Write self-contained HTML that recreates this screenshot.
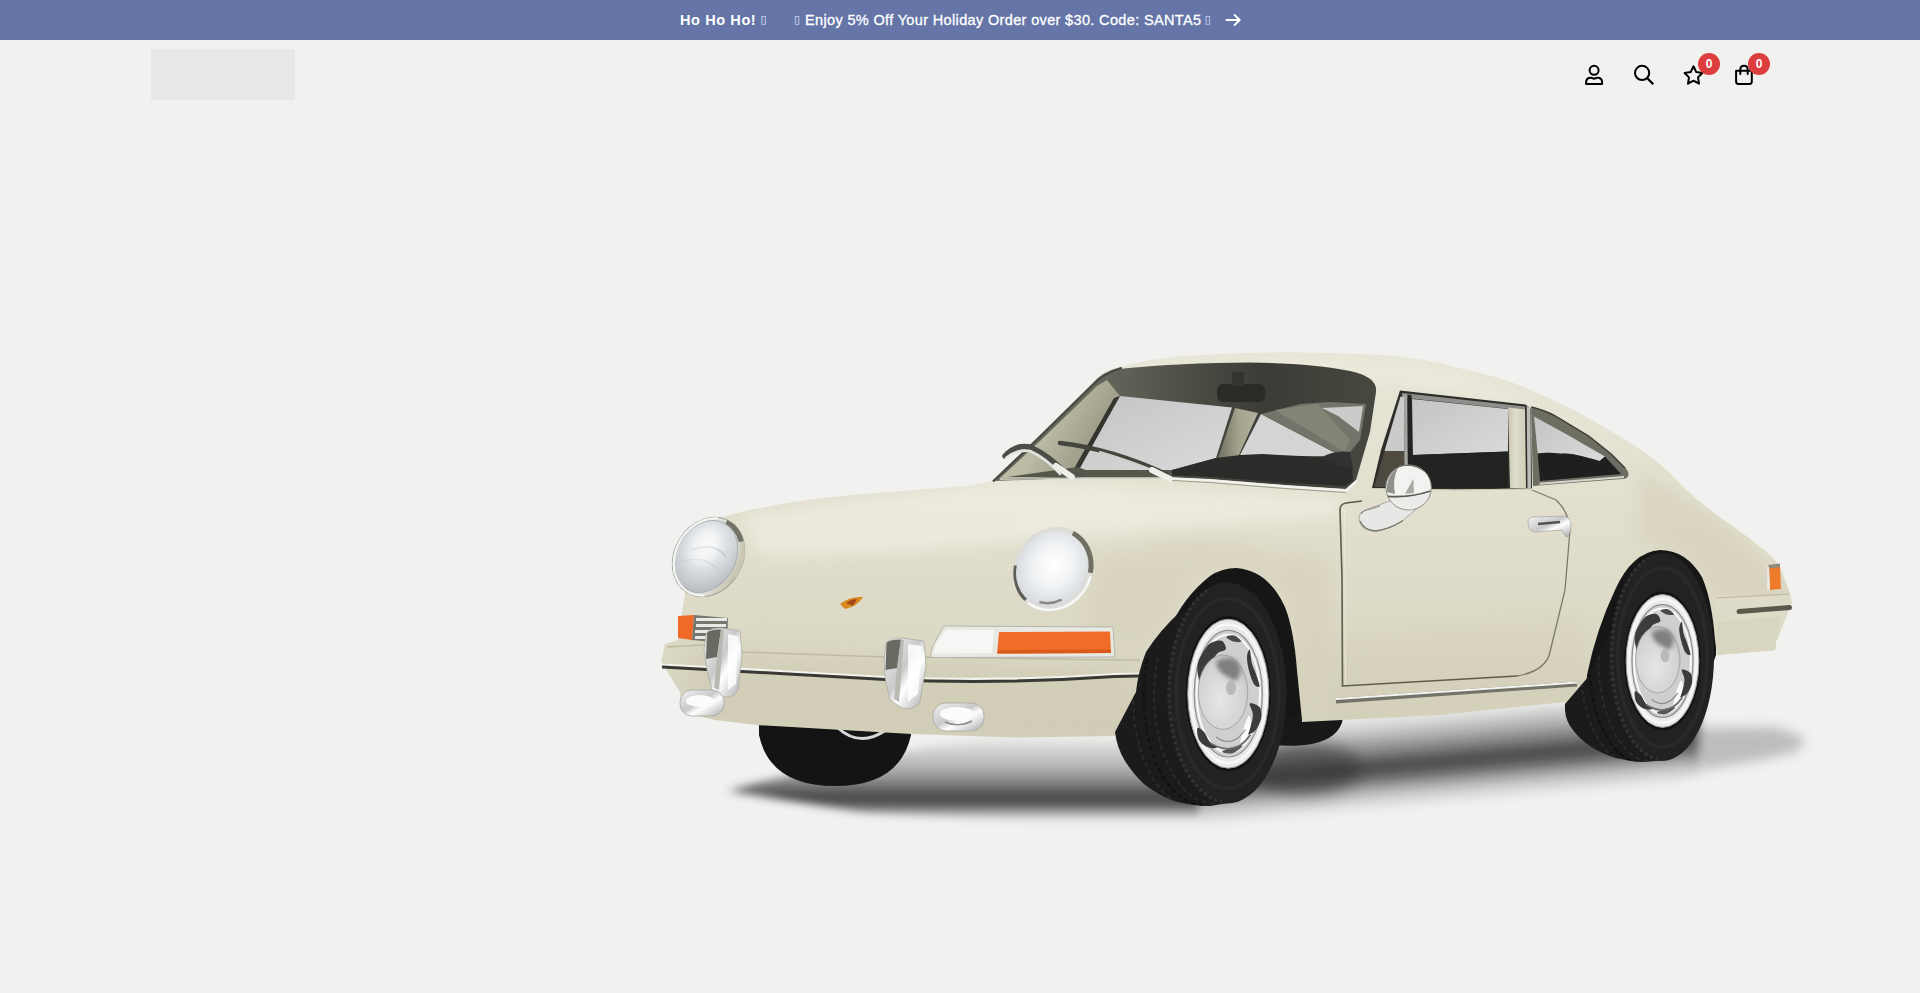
<!DOCTYPE html>
<html lang="en">
<head>
<meta charset="utf-8">
<title>Holiday Store</title>
<style>
*{box-sizing:border-box;margin:0;padding:0}
html,body{width:1920px;height:993px;overflow:hidden;background:#f1f1ef;font-family:"Liberation Sans","DejaVu Sans",sans-serif}
.banner{position:absolute;left:0;top:0;width:1920px;height:40px;background:#6575a8;color:#fff;font-size:14.5px;letter-spacing:.35px;line-height:40px;white-space:nowrap}
.banner span{position:absolute;top:0;height:40px}
.banner .b1{left:680px;font-weight:700;letter-spacing:.6px}
.banner .b2{left:805px;-webkit-text-stroke:.3px #fff}
.banner .tofu{top:10px;height:20px;font:11px/20px "DejaVu Sans",sans-serif;letter-spacing:0;color:#e4e8f8}
.logo{position:absolute;left:151px;top:49px;width:144px;height:51px;background:#e8e8e6}
.stage{position:absolute;left:0;top:0;width:1920px;height:993px}
.badge{position:absolute;top:53px;width:22px;height:22px;border-radius:50%;background:#dc3d3d;color:#fff;font-size:12px;font-weight:700;text-align:center;line-height:22px}
</style>
</head>
<body>
<svg class="stage" viewBox="0 0 1920 993">
<defs>
<filter id="b2" x="-20%" y="-20%" width="140%" height="140%"><feGaussianBlur stdDeviation="2"/></filter>
<filter id="b4" x="-20%" y="-20%" width="140%" height="140%"><feGaussianBlur stdDeviation="4"/></filter>
<filter id="b6" x="-30%" y="-40%" width="160%" height="180%"><feGaussianBlur stdDeviation="6"/></filter>
<filter id="b8" x="-30%" y="-30%" width="160%" height="160%"><feGaussianBlur stdDeviation="8"/></filter>
<filter id="b14" x="-30%" y="-50%" width="160%" height="200%"><feGaussianBlur stdDeviation="14"/></filter>
<linearGradient id="shad" x1="0" y1="0" x2="0" y2="1">
<stop offset="0" stop-color="#8a8a8a" stop-opacity=".15"/><stop offset=".45" stop-color="#4a4a4a" stop-opacity=".8"/><stop offset="1" stop-color="#2c2c2c"/>
</linearGradient>
<linearGradient id="shA" x1="0" y1="737" x2="0" y2="822" gradientUnits="userSpaceOnUse">
<stop offset="0" stop-color="#777" stop-opacity=".05"/><stop offset=".42" stop-color="#5a5a5a" stop-opacity=".5"/><stop offset=".72" stop-color="#363636" stop-opacity=".94"/><stop offset=".83" stop-color="#444" stop-opacity=".75"/><stop offset="1" stop-color="#888" stop-opacity="0"/>
</linearGradient>
<linearGradient id="shB" x1="1445" y1="715" x2="1453" y2="805" gradientUnits="userSpaceOnUse">
<stop offset="0" stop-color="#777" stop-opacity=".12"/><stop offset=".25" stop-color="#5e5e5e" stop-opacity=".55"/><stop offset=".5" stop-color="#3a3a3a" stop-opacity=".93"/><stop offset=".62" stop-color="#444" stop-opacity=".8"/><stop offset=".8" stop-color="#666" stop-opacity=".35"/><stop offset="1" stop-color="#888" stop-opacity="0"/>
</linearGradient>
<linearGradient id="body" x1="0" y1="350" x2="0" y2="740" gradientUnits="userSpaceOnUse">
<stop offset="0" stop-color="#e8e6d8"/><stop offset=".4" stop-color="#e2dfce"/><stop offset=".75" stop-color="#dbd8c4"/><stop offset="1" stop-color="#d3d0ba"/>
</linearGradient>
<linearGradient id="wsband" x1="1100" y1="0" x2="1376" y2="0" gradientUnits="userSpaceOnUse"><stop offset="0" stop-color="#66675c"/><stop offset=".35" stop-color="#4a4b43"/><stop offset=".6" stop-color="#3b3c36"/><stop offset="1" stop-color="#47483f"/></linearGradient>
<linearGradient id="wsleft" x1="1040" y1="440" x2="1090" y2="470" gradientUnits="userSpaceOnUse"><stop offset="0" stop-color="#bcbba6"/><stop offset="1" stop-color="#969581"/></linearGradient>
<linearGradient id="wspillar" x1="0" y1="0" x2="1" y2="0"><stop offset="0" stop-color="#6f6f60"/><stop offset=".5" stop-color="#a3a28d"/><stop offset="1" stop-color="#b3b19c"/></linearGradient>
<linearGradient id="bpillar" x1="0" y1="0" x2="1" y2="0"><stop offset="0" stop-color="#c9c6b2"/><stop offset=".4" stop-color="#dedbc9"/><stop offset="1" stop-color="#d0cdb9"/></linearGradient>
<linearGradient id="glass" x1="0" y1="0" x2="1" y2="1">
<stop offset="0" stop-color="#c4c4c4"/><stop offset="1" stop-color="#dadada"/>
</linearGradient>
<linearGradient id="ringL" x1="0" y1="0" x2="1" y2="0"><stop offset="0" stop-color="#d6d6d4"/><stop offset=".7" stop-color="#e2e2de"/><stop offset="1" stop-color="#c4c1ab"/></linearGradient>
<radialGradient id="lamp2" cx=".5" cy=".45" r=".6"><stop offset="0" stop-color="#ffffff"/><stop offset=".45" stop-color="#f1f3f5"/><stop offset="1" stop-color="#d3d7da"/></radialGradient>
<radialGradient id="lamp" cx=".42" cy=".36" r=".7">
<stop offset="0" stop-color="#f3f5f6"/><stop offset=".55" stop-color="#d6dadd"/><stop offset="1" stop-color="#b3b8bd"/>
</radialGradient>
<linearGradient id="chrome" x1="0" y1="0" x2="1" y2="1">
<stop offset="0" stop-color="#f4f4f4"/><stop offset=".45" stop-color="#c9c9c9"/><stop offset=".6" stop-color="#ffffff"/><stop offset="1" stop-color="#a9a9a9"/>
</linearGradient>
<radialGradient id="rim" cx=".5" cy=".5" r=".5">
<stop offset="0" stop-color="#e9e9e9"/><stop offset=".45" stop-color="#dcdcdc"/><stop offset=".6" stop-color="#9a9a9a"/><stop offset=".75" stop-color="#f2f2f2"/><stop offset="1" stop-color="#cfcfcf"/>
</radialGradient>
<clipPath id="bodyclip"><path d="M684 600C684.8 594.7 686.5 577.8 689.0 568.0C691.5 558.2 695.0 548.3 699.0 541.0C703.0 533.7 707.8 528.3 713.0 524.0C718.2 519.7 721.3 517.8 730.0 515.0C738.7 512.2 750.8 509.7 765.0 507.0C779.2 504.3 798.3 501.2 815.0 499.0C831.7 496.8 848.3 495.5 865.0 494.0C881.7 492.5 898.3 491.3 915.0 490.0C931.7 488.7 952.2 487.5 965.0 486.0C977.8 484.5 987.5 481.8 992.0 481.0C999.2 474.2 1018.3 456.2 1035.0 440.0C1051.7 423.8 1080.5 395.2 1092.0 384.0C1103.5 372.8 1099.0 375.4 1104.0 372.5C1109.0 369.6 1112.7 368.8 1122.0 366.5C1131.3 364.2 1145.3 360.5 1160.0 358.5C1174.7 356.5 1189.2 355.5 1210.0 354.5C1230.8 353.5 1260.0 352.6 1285.0 352.5C1310.0 352.4 1340.8 353.3 1360.0 354.0C1379.2 354.7 1387.5 355.2 1400.0 356.5C1412.5 357.8 1425.8 360.2 1435.0 362.0C1444.2 363.8 1443.3 364.0 1455.0 367.0C1466.7 370.0 1488.3 374.3 1505.0 380.0C1521.7 385.7 1538.3 393.1 1555.0 401.0C1571.7 408.9 1588.3 417.7 1605.0 427.5C1621.7 437.3 1640.5 448.8 1655.0 460.0C1669.5 471.2 1681.7 485.8 1692.0 495.0C1702.3 504.2 1706.5 507.1 1717.0 515.0C1727.5 522.9 1745.0 534.6 1755.0 542.5C1765.0 550.4 1772.2 556.6 1777.0 562.5C1781.8 568.4 1781.8 572.8 1784.0 578.0C1786.2 583.2 1789.0 591.3 1790.0 594.0L1792 602 L1777 640 L1775 650 L1717 655 L1715 640 Q1712 600 1702 577 Q1686 550 1660 550 Q1632 552 1615 590 Q1596 630 1587 675 L1585 700 L1440 715 L1302 722 L1302 720 L1297 670 Q1294 630 1285 607 Q1268 570 1236 568 Q1222 568 1210 576 Q1183 597 1168 632 L1160 700 L1140 722 L1115 736 L1015 737.5 L912 734 L757 725 L715 720 L682 712 L680 692 L661 662 L665 644 L678 640Z"/></clipPath>
<radialGradient id="hub" cx=".45" cy=".6" r=".7"><stop offset="0" stop-color="#e6e6e8"/><stop offset=".7" stop-color="#d2d2d4"/><stop offset="1" stop-color="#b4b4b6"/></radialGradient>
<clipPath id="shadclip"><rect x="600" y="700" width="1320" height="293"/></clipPath>
</defs>

<!-- ground shadow -->
<g id="shadow">
<path d="M728 791 L760 782 L910 750 L990 737 L1200 737 L1200 826 L1117 826 L867 813Z" fill="url(#shA)" filter="url(#b4)"/>
<path d="M1200 737 L1300 722 L1590 700 L1700 700 L1700 775 L1620 800 L1500 815 L1305 832 L1200 832Z" fill="url(#shB)" filter="url(#b4)"/>
<ellipse cx="1305" cy="768" rx="55" ry="26" fill="#333" opacity=".55" filter="url(#b8)"/>
<path d="M1690 728 L1775 727 L1806 738 L1796 752 L1760 760 L1700 770Z" fill="#8a8a8a" opacity=".5" filter="url(#b6)"/>
</g>

<!-- far front wheel under bumper -->
<path d="M759 720 L911 720 L911 735 Q900 786 835 786 Q770 786 759 735 Z" fill="#141414"/>
<path d="M838 728 Q860 748 886 730" fill="none" stroke="#d8d8d8" stroke-width="3"/>

<!-- dark arch interiors -->
<path d="M1140 700 L1160 600 L1200 560 L1260 556 L1300 600 L1310 726 L1140 728Z" fill="#161616"/>
<path d="M1580 700 L1600 590 L1640 540 L1690 540 L1716 590 L1716 655 L1700 700Z" fill="#161616"/>
<path d="M1270 716 L1343 718 Q1340 738 1312 744 Q1296 747 1270 745Z" fill="#181818"/>

<!-- body silhouette -->
<path id="bodyshape" d="M684 600C684.8 594.7 686.5 577.8 689.0 568.0C691.5 558.2 695.0 548.3 699.0 541.0C703.0 533.7 707.8 528.3 713.0 524.0C718.2 519.7 721.3 517.8 730.0 515.0C738.7 512.2 750.8 509.7 765.0 507.0C779.2 504.3 798.3 501.2 815.0 499.0C831.7 496.8 848.3 495.5 865.0 494.0C881.7 492.5 898.3 491.3 915.0 490.0C931.7 488.7 952.2 487.5 965.0 486.0C977.8 484.5 987.5 481.8 992.0 481.0C999.2 474.2 1018.3 456.2 1035.0 440.0C1051.7 423.8 1080.5 395.2 1092.0 384.0C1103.5 372.8 1099.0 375.4 1104.0 372.5C1109.0 369.6 1112.7 368.8 1122.0 366.5C1131.3 364.2 1145.3 360.5 1160.0 358.5C1174.7 356.5 1189.2 355.5 1210.0 354.5C1230.8 353.5 1260.0 352.6 1285.0 352.5C1310.0 352.4 1340.8 353.3 1360.0 354.0C1379.2 354.7 1387.5 355.2 1400.0 356.5C1412.5 357.8 1425.8 360.2 1435.0 362.0C1444.2 363.8 1443.3 364.0 1455.0 367.0C1466.7 370.0 1488.3 374.3 1505.0 380.0C1521.7 385.7 1538.3 393.1 1555.0 401.0C1571.7 408.9 1588.3 417.7 1605.0 427.5C1621.7 437.3 1640.5 448.8 1655.0 460.0C1669.5 471.2 1681.7 485.8 1692.0 495.0C1702.3 504.2 1706.5 507.1 1717.0 515.0C1727.5 522.9 1745.0 534.6 1755.0 542.5C1765.0 550.4 1772.2 556.6 1777.0 562.5C1781.8 568.4 1781.8 572.8 1784.0 578.0C1786.2 583.2 1789.0 591.3 1790.0 594.0L1792 602 L1777 640 L1775 650 L1717 655 L1715 640 Q1712 600 1702 577 Q1686 550 1660 550 Q1632 552 1615 590 Q1596 630 1587 675 L1585 700 L1440 715 L1302 722 L1302 720 L1297 670 Q1294 630 1285 607 Q1268 570 1236 568 Q1222 568 1210 576 Q1183 597 1168 632 L1160 700 L1140 722 L1115 736 L1015 737.5 L912 734 L757 725 L715 720 L682 712 L680 692 L661 662 L665 644 L678 640Z" fill="url(#body)"/>

<!-- body shading -->
<g clip-path="url(#bodyclip)">
<path d="M740 516 L1000 480 L1200 490 L1340 497 L1340 516 L1100 535 L900 552 L760 556Z" fill="#f0eee4" opacity=".75" filter="url(#b8)"/>
<path d="M1110 372 L1290 356 L1450 368 L1600 430 L1520 402 L1400 384 L1120 376Z" fill="#eeebde" opacity=".6" filter="url(#b4)"/>
<path d="M690 650 L1140 670 L1140 740 L690 720Z" fill="#cbc6ad" opacity=".4" filter="url(#b8)"/>
<path d="M1340 640 L1580 620 L1590 700 L1340 720Z" fill="#cdc8b0" opacity=".25" filter="url(#b8)"/>
<path d="M1090 560 L1200 540 L1330 560 L1335 700 L1300 700 L1290 600 L1240 565 L1200 575 L1150 640 L1090 640Z" fill="#d2cdb6" opacity=".45" filter="url(#b8)"/>
<path d="M1640 470 L1720 520 L1785 580 L1790 600 L1720 600 L1690 560 L1640 540Z" fill="#d0cbb4" opacity=".45" filter="url(#b8)"/>
</g>


<!-- windshield -->
<path d="M994 481 L1036 441 L1094 384 Q1104 372.5 1124 368.5 Q1180 363 1250 362.5 Q1310 363 1350 371 Q1378 377 1376 392 L1370 432 L1356 480 L1346 489 L1285 485 L1210 479 L1172 477.5 L1085 477.5Z" fill="url(#wsband)"/>
<!-- inner glass zones -->
<path d="M999 479 L1040 441 L1097 386 L1107 380 L1120 396 L1078 467 L1072 477Z" fill="url(#wsleft)"/>
<path d="M993 481.5 L1036 440.5 L1093 384.5 Q1103 373 1122 368" fill="none" stroke="#4b4b43" stroke-width="2.4"/>
<path d="M1120 396 L1232 407.5 L1216 458 L1172 470 L1085 470 L1078 467Z" fill="url(#glass)"/>
<path d="M1235 408 L1258 413 L1238 457 L1218 458Z" fill="url(#wspillar)"/>
<path d="M1261 414 L1341 456 L1239 457Z" fill="#d4d4d4"/>
<path d="M1261 414 L1300 404 L1330 402 L1366 404 L1360 440 L1346 457 L1341 456Z" fill="#74756a"/>
<path d="M1275 410 L1318 404 L1350 440 L1345 452Z" fill="#8c8c7e" opacity=".7"/>
<path d="M1322 408 L1363 406 L1359 432 L1338 416Z" fill="#cbcbc9"/>
<path d="M1172 470 L1216 458 L1240 455 L1262 454 L1340 458 L1352 464 L1353 481 L1345 486 L1285 482.5 L1210 477 L1172 475.5Z" fill="#2b2c2a"/>
<path d="M1320 458 Q1335 450 1350 452 L1353 470 L1340 466Z" fill="#303130"/>
<rect x="1217" y="384" width="48" height="18" rx="6" fill="#2a2a27"/>
<rect x="1232" y="372" width="12" height="14" fill="#33342e"/>
<path d="M1114 398 L1120 396 L1080 468 L1075 467Z" fill="#33342e"/>
<path d="M1078 467 L1085 470 L1172 470 L1172 477 L1085 477 L1008 477Z" fill="#55564c"/>
<!-- windshield chrome lower edge -->
<path d="M1172 478.5 L1210 480.5 L1285 486.5 L1346 490.5 L1357 481" fill="none" stroke="#f2f2ee" stroke-width="2.4" stroke-linejoin="round"/>
<path d="M1172 480.5 L1210 482.5 L1285 488.5 L1346 492.5" fill="none" stroke="#9d9a88" stroke-width="1"/>
<path d="M1000 479.5 L1085 478 L1172 478" fill="none" stroke="#c9c9c0" stroke-width="1.2"/>
<!-- wipers -->
<path d="M1005 456 Q1016 444 1030 447 Q1050 456 1066 474" fill="none" stroke="#4d4d47" stroke-width="5.5" stroke-linecap="round"/>
<path d="M1006 458 Q1017 449 1030 451 Q1046 458 1060 474" fill="none" stroke="#e4e4e0" stroke-width="2.6" stroke-linecap="round"/>
<path d="M1056 466 L1072 477" fill="none" stroke="#efefea" stroke-width="6" stroke-linecap="round"/>
<path d="M1060 443 Q1112 449 1166 474" fill="none" stroke="#44443f" stroke-width="4.5" stroke-linecap="round"/>
<path d="M1100 452 Q1135 462 1166 476" fill="none" stroke="#cfcfca" stroke-width="2.2" stroke-linecap="round"/>
<path d="M1152 470 L1170 479" fill="none" stroke="#efefea" stroke-width="6" stroke-linecap="round"/>
<path d="M1076 468 L1092 446" fill="none" stroke="#3c3c37" stroke-width="1.6"/>

<!-- side door window -->
<path d="M1400 390.5 L1525.5 404.5 L1531 409 L1532 488.5 L1455 489.5 L1372 488 L1381 450Z" fill="#2d2d29"/>
<path d="M1402 393 L1525 406.5 L1525 410.5 L1402 397.500Z" fill="#8e8e8a"/>
<path d="M1400.5 396.5 L1404 397 L1404.5 451 L1384.5 451Z" fill="#cbcbcb"/>
<path d="M1384.5 451 L1404.5 451 L1404.5 487 L1374 487Z" fill="#4e4a3f"/>
<path d="M1404 394 L1407.5 394.5 L1408 487.5 L1404.5 487.500Z" fill="#a4a4a0"/>
<path d="M1407.5 394.5 L1411.5 395 L1412.5 488 L1408 488Z" fill="#232321"/>
<path d="M1412 399 L1508 409 L1508 451.5 L1413 455Z" fill="url(#glass)"/>
<path d="M1413 455 L1508 451.5 L1508 488 L1413.5 488Z" fill="#222221"/>
<path d="M1508 407.5 L1525 409.5 L1526 488 L1510 488Z" fill="url(#bpillar)"/>
<path d="M1526.7 406 L1530.5 408.5 L1531 488.5 L1527.5 488.500Z" fill="#bdbdb8"/>
<path d="M1372 488.5 L1455 490 L1532 489" fill="none" stroke="#c9c6b2" stroke-width="1"/>
<!-- rear quarter window -->
<path d="M1531 406.6 Q1545 410 1555.4 415.5 L1588.6 435.4 L1610.8 453.2 L1625.2 467.6 Q1632 476 1625 478.8 L1539 485.5 L1533 486Z" fill="#6d6d62"/>
<path d="M1531.5 407 Q1545 410.5 1555.4 416 L1588.6 436 L1610.8 453.8 L1625 468" fill="none" stroke="#3b3b35" stroke-width="1.4"/>
<path d="M1534 416.6 L1566.5 434.3 L1605 456.5 L1599.7 461 Q1590 458 1583 456.5 Q1570 453 1561 453.7 Q1548 452 1537.7 453.500Z" fill="url(#glass)"/>
<path d="M1537.7 453.5 Q1548 452 1561 453.7 Q1570 453 1583 456.5 Q1590 458 1599.7 461 L1605 456.5 L1621 474 L1540 481Z" fill="#1f1f1f"/>
<path d="M1539.5 483.8 L1624 477" fill="none" stroke="#d6d6cc" stroke-width="2"/>

<!-- door lines -->
<path d="M1362 501 L1346 503 Q1340 504 1340 510 L1342 577 L1342.5 686 L1517 676" fill="none" stroke="#5e5c4e" stroke-width="1.6"/>
<path d="M1517 676 Q1546 671 1550 652 L1565 590 L1570 530 Q1569 512 1556 500 L1532 490" fill="none" stroke="#7d7a68" stroke-width="1.3"/>
<path d="M1344.5 510 L1345.5 684" fill="none" stroke="#ece9dc" stroke-width="1.2" opacity=".8"/>
<!-- rocker strip -->
<path d="M1336 698 L1577 681.5 L1577 686.5 L1336 703.500Z" fill="#73736a"/>
<path d="M1336 698 L1577 681.5 L1577 683.5 L1336 700Z" fill="#f4f4f0"/>
<!-- handle -->
<path d="M1528 521 Q1528 517 1534 517 L1565 516 Q1571 518 1571 526 Q1571 536 1566 537 L1562 530 L1534 532 Q1528 531 1528 521Z" fill="url(#chrome)" stroke="#9a9a94" stroke-width=".6"/>
<path d="M1538 524 L1560 522" stroke="#55554f" stroke-width="2.5"/>
<!-- door mirror -->
<path d="M1359 517 Q1360 511 1368 509 L1398 498 Q1410 500 1420 506 L1401 522 Q1385 531 1372 531 Q1358 528 1359 517Z" fill="#e7e7e6" stroke="#9b9b96" stroke-width=".8"/>
<path d="M1360 521 Q1364 530.5 1376 531 Q1390 529 1403 520.5" fill="none" stroke="#74746f" stroke-width="1.3"/>
<path d="M1361 514 Q1363 510.5 1369 509.5 L1380 506" fill="none" stroke="#8a8a85" stroke-width="1.2"/>
<ellipse cx="1408.6" cy="487.5" rx="22.7" ry="22.5" fill="#f2f2f1" stroke="#8c8c87" stroke-width="1"/>
<path d="M1387 492 Q1386 476 1398 467.5 Q1392 480 1395 494Z" fill="#8f8f8b"/>
<path d="M1388 496.5 Q1410 498 1430.5 491" fill="none" stroke="#595954" stroke-width="1.8"/>
<path d="M1405 494 L1413.5 478.5 L1413.8 493Z" fill="#a8a8a5"/>
<path d="M1388.5 497.5 Q1410 499 1430 492.5 Q1426 505 1412 509.5 Q1397 509 1388.5 497.500Z" fill="#ebebea"/>
<path d="M1398 466.5 Q1412 462.5 1424 471" fill="none" stroke="#6f6f6a" stroke-width="1"/>


<!-- bumper seam / shading -->
<path d="M667 647 L702 645 L742 652 L885 657 L925 657 L1115 660 L1140 660" fill="none" stroke="#b9b49c" stroke-width="1.5" opacity=".8"/>
<path d="M662 664.5 Q780 671.5 885 677 Q1000 682 1115 674 L1140 673.5" fill="none" stroke="#f3f3ee" stroke-width="2.2"/>
<path d="M662 667 Q780 674 885 679.5 Q1000 684.5 1115 676.5 L1140 676" fill="none" stroke="#3a3a35" stroke-width="3"/>

<!-- left turn signal + horn grille -->
<path d="M678 616 L694 615 L692 640 L678 638Z" fill="#ee6a26"/>
<path d="M694 615 L728 618 L727 643 L692 640Z" fill="#77776f"/>
<path d="M696 619.5 H727 M696 625.5 H726 M695 631.5 H726 M695 637.5 H726" stroke="#e9e9e6" stroke-width="3"/>
<!-- right turn signal -->
<path d="M944 626 L1113 627 L1115 657 L931 657.5 Q930 650 936 640Z" fill="#e9e9e4" stroke="#b5b5ac" stroke-width="1"/>
<path d="M946 630 L994 630 L992 653 L934 653.5 Q934 648 938 641Z" fill="#f6f6f4"/>
<path d="M999 632 L1110 631.5 L1111 653 L997 653.500Z" fill="#ef6d28"/>
<path d="M999 650 L1111 649.5 L1111 653 L997 653.500Z" fill="#d95a1a"/>

<!-- bumper guards -->
<path d="M706 634 Q710 627 722 628 L740 631 L742 655 L738 690 Q734 698 724 697 L712 690 Q706 670 704 650Z" fill="url(#chrome)" stroke="#a5a59e" stroke-width=".7"/>
<path d="M707 633 Q710 629 721 629.5 L717 657 L706 659Z" fill="#6a6a63"/>
<path d="M717 657 L721 629.5 L724 630 L719 690 L714 688Z" fill="#b9b9b4"/>
<path d="M728 634 L738 636 L736 684 L728 690Z" fill="#ffffff" opacity=".85"/>
<path d="M886 644 Q890 637 902 638 L924 641 L926 665 L920 702 Q914 711 902 708 L890 700 Q884 680 884 662Z" fill="url(#chrome)" stroke="#a5a59e" stroke-width=".7"/>
<path d="M886.5 643 Q890 639 901 639.5 L897 668 L885.5 670Z" fill="#6a6a63"/>
<path d="M897 668 L901 639.5 L904 640 L899 702 L894 699Z" fill="#b9b9b4"/>
<path d="M908 644 L922 646 L918 694 L908 702Z" fill="#ffffff" opacity=".85"/>
<!-- fog lights -->
<rect x="680" y="690" width="44" height="26" rx="12" fill="url(#chrome)" stroke="#a8a8a2" stroke-width=".8"/>
<ellipse cx="700" cy="701" rx="14" ry="6" fill="#fbfbfb"/>
<rect x="933" y="703" width="51" height="28" rx="13" fill="url(#chrome)" stroke="#a8a8a2" stroke-width=".8"/>
<ellipse cx="957" cy="714" rx="17" ry="7" fill="#fbfbfb"/>
<path d="M945 722 Q958 728 972 721" fill="none" stroke="#8d8d88" stroke-width="1.5"/>

<!-- headlights -->
<g transform="rotate(31 708.5 557)">
<ellipse cx="708.5" cy="557" rx="34" ry="41.5" fill="url(#ringL)" stroke="#a3a39d" stroke-width="1.1"/>
<path d="M705.8 518.1 A31.5 39.0 0 0 1 728.7 527.1" fill="none" stroke="#727266" stroke-width="5"/>
<path d="M729.1 526.7 A32.0 39.5 0 0 1 740.4 560.4" fill="none" stroke="#c9c6b2" stroke-width="4"/>
<ellipse cx="706" cy="558" rx="29.5" ry="38" fill="url(#lamp)"/>
<ellipse cx="706" cy="558" rx="29.5" ry="38" fill="none" stroke="#a9aeb2" stroke-width="1"/>
<path d="M725.0 592.1 A33.0 40.5 0 1 1 697.2 518.9" fill="none" stroke="#f6f6f4" stroke-width="2.2"/>
<path d="M690 560 Q706 540 724 548" fill="none" stroke="#c3c8cc" stroke-width="1.5"/>
<path d="M688 574 Q706 556 726 564" fill="none" stroke="#c9ced2" stroke-width="1.2"/>
<ellipse cx="700" cy="550" rx="14" ry="20" fill="#ffffff" opacity=".5" filter="url(#b4)"/>
</g>
<g transform="rotate(33 1053.2 569.2)">
<ellipse cx="1053.2" cy="569.2" rx="39" ry="43.5" fill="#dcdcd8"/>
<path d="M1050.0 528.4 A36.5 41.0 0 0 1 1086.3 551.9" fill="none" stroke="#6f6f62" stroke-width="5"/>
<path d="M1046.9 609.6 A36.5 41.0 0 0 1 1020.1 586.5" fill="none" stroke="#5e5e58" stroke-width="4"/>
<ellipse cx="1051.5" cy="569.5" rx="34" ry="39" fill="url(#lamp2)"/>
<path d="M1088.4 554.8 A37.5 42.0 0 0 1 1049.9 611.0" fill="none" stroke="#f8f8f6" stroke-width="2.5"/>
<path d="M1076.9 590.1 A31.0 36.0 0 0 1 1059.5 604.3" fill="none" stroke="#8a8a84" stroke-width="2.5"/>
</g>
<!-- hood crest -->
<path d="M840 604 Q850 596 863 597 Q858 606 845 609Z" fill="#d98a1e"/>
<path d="M846 603 Q851 599 857 599 L853 606Z" fill="#a5481a"/>

<!-- rear bumper & lamp -->
<path d="M1717 598 L1790 594 L1792 602 L1777 640 L1775 650 L1717 655Z" fill="#dedbc8"/>
<path d="M1717 598 L1790 594" stroke="#bfbaa2" stroke-width="1.2"/>
<path d="M1717 622 L1781 617 L1777 640 L1775 650 L1717 655Z" fill="#d6d3be" opacity=".7"/>
<path d="M1739 611.5 L1789.5 607.5" stroke="#5b584c" stroke-width="5" stroke-linecap="round"/>
<path d="M1776 641 L1780 639 L1780 647 L1776 648Z" fill="#f3f3f0"/>
<path d="M1769 568 L1780 566.5 L1781 589 L1770 590Z" fill="#ee7a2c"/>
<path d="M1768 565 L1780 563.5 L1780 567 L1769 568.500Z" fill="#8f8b7c"/>
<path d="M1767 566 L1769 567 L1770 590 L1767 590Z" fill="#e9e9e4"/>

<!-- front wheel -->
<path d="M1180 612 Q1160 630 1146 652 Q1138 672 1136 692 L1115 732 Q1117 748 1125 761 Q1134 775 1144 784 Q1158 795 1174 801 Q1192 806 1210 806 L1228 803 L1228 600Z" fill="#1b1b1b"/>
<clipPath id="tcf"><path d="M1180 612 Q1160 630 1146 652 Q1138 672 1136 692 L1115 732 Q1117 748 1125 761 Q1134 775 1144 784 Q1158 795 1174 801 Q1192 806 1210 806 L1228 803 L1228 600Z"/></clipPath><g clip-path="url(#tcf)">
<path d="M1157.8 657.5 A59.5 108.8 0 0 0 1215.7 803.5" fill="none" stroke="#2a2a2a" stroke-width="2" stroke-dasharray="5 3"/>
<path d="M1147.3 658.8 A59.5 108.8 0 0 0 1205.3 804.8" fill="none" stroke="#101010" stroke-width="2" stroke-dasharray="5 3"/>
<path d="M1136.8 660.1 A59.5 108.8 0 0 0 1194.8 806.1" fill="none" stroke="#2a2a2a" stroke-width="2" stroke-dasharray="5 3"/>
</g>
<ellipse cx="1227.0" cy="693.0" rx="59.5" ry="110.5" fill="#222"/>
<path d="M1207.2 590.6 A58.0 109.0 0 0 0 1221.9 801.6" fill="none" stroke="#343434" stroke-width="3.5" stroke-dasharray="2.5 3.5"/>
<ellipse cx="1227.5" cy="693.5" rx="51.2" ry="95.0" fill="none" stroke="#292929" stroke-width="4"/>
<ellipse cx="1228.3" cy="693.7" rx="42.6" ry="77.5" fill="#111"/>
<ellipse cx="1228.3" cy="693.7" rx="40.6" ry="74.5" fill="#e9e9e9" stroke="#9c9c9c" stroke-width="1"/>
<ellipse cx="1228.3" cy="693.7" rx="34.1" ry="63.3" fill="#cfcfd1" stroke="#8f8f8f" stroke-width="1.2"/>
<ellipse cx="1228.3" cy="693.7" rx="31.7" ry="58.9" fill="none" stroke="#fafafa" stroke-width="2"/>
<ellipse cx="1228.3" cy="693.7" rx="37.8" ry="69.3" fill="none" stroke="#f7f7f7" stroke-width="2.5"/>
<path d="M1201.1 655.7C1203.1 652.1 1206.2 646.3 1209.6 643.8C1213.0 641.3 1218.7 639.9 1221.4 640.8C1224.1 641.7 1226.5 646.9 1225.9 649.0C1225.2 651.1 1219.7 651.1 1217.3 653.5C1215.0 655.8 1213.2 659.3 1211.7 663.2C1210.1 667.0 1209.8 673.1 1208.0 676.6C1206.2 680.0 1202.7 684.0 1201.1 684.0C1199.5 684.0 1198.9 679.7 1198.3 676.6C1197.6 673.5 1197.0 668.9 1197.4 665.4C1197.9 661.9 1199.1 659.3 1201.1 655.7Z" fill="#3c3c3c"/>
<path d="M1197.4 728.0C1198.3 726.6 1201.9 729.5 1203.9 731.7C1206.0 733.9 1207.4 738.8 1209.6 741.4C1211.9 744.0 1217.6 746.3 1217.3 747.3C1217.1 748.3 1211.0 748.6 1208.0 747.3C1205.0 746.1 1200.8 743.1 1199.1 739.9C1197.3 736.7 1196.6 729.3 1197.4 728.0Z" fill="#3c3c3c"/>
<path d="M1249.8 649.7C1250.6 650.7 1250.9 659.3 1251.8 663.2C1252.8 667.0 1254.2 669.0 1255.5 672.8C1256.8 676.7 1259.8 684.4 1259.6 686.2C1259.3 688.1 1255.6 686.6 1253.9 684.0C1252.1 681.4 1250.2 675.1 1249.0 670.6C1247.9 666.1 1246.8 660.7 1247.0 657.2C1247.1 653.7 1249.0 648.8 1249.8 649.7Z" fill="#3c3c3c"/>
<path d="M1249.8 703.4C1251.0 702.4 1257.7 704.6 1259.6 707.1C1261.5 709.6 1261.9 714.4 1261.2 718.3C1260.5 722.1 1257.7 727.6 1255.5 730.2C1253.3 732.8 1248.4 735.3 1247.8 733.9C1247.2 732.6 1251.0 725.5 1251.8 722.0C1252.7 718.5 1253.0 716.2 1252.7 713.1C1252.3 710.0 1248.7 704.4 1249.8 703.4Z" fill="#3c3c3c"/>
<path d="M1226.3 637.1C1226.5 636.1 1231.9 634.8 1234.4 635.6C1236.9 636.3 1241.5 640.6 1241.3 641.6C1241.1 642.5 1235.7 642.3 1233.2 641.6C1230.7 640.8 1226.1 638.1 1226.3 637.1Z" fill="#4a4a4a"/>
<path d="M1222.2 751.8C1222.2 752.8 1229.0 754.3 1232.4 753.3C1235.7 752.3 1242.5 746.8 1242.5 745.9C1242.5 744.9 1235.7 746.3 1232.4 747.3C1229.0 748.3 1222.2 750.8 1222.2 751.8Z" fill="#555"/>
<path d="M1207.2 680.3C1208.0 675.9 1210.8 667.9 1212.9 663.9C1214.9 659.9 1218.8 656.0 1219.4 656.5C1219.9 656.9 1217.3 663.2 1216.1 666.9C1214.9 670.6 1213.4 675.0 1212.1 678.8C1210.7 682.6 1208.8 689.7 1208.0 690.0C1207.2 690.2 1206.4 684.6 1207.2 680.3Z" fill="#fbfbfb"/>
<path d="M1242.9 731.0C1244.3 726.2 1247.2 717.3 1248.6 716.1C1250.0 714.8 1251.3 720.0 1251.0 723.5C1250.8 727.0 1248.7 733.4 1247.0 736.9C1245.2 740.4 1241.2 745.4 1240.5 744.4C1239.8 743.4 1241.6 735.7 1242.9 731.0Z" fill="#fbfbfb"/>
<path d="M1210.0 742.9 Q1234.4 757.8 1250.6 734.7" fill="none" stroke="#6a6a6a" stroke-width="1.6"/>
<path d="M1216.1 736.9 Q1232.4 748.8 1245.4 729.5" fill="none" stroke="#8a8a8a" stroke-width="1.2"/>
<ellipse cx="1223.0" cy="692.2" rx="24.8" ry="37.2" fill="url(#hub)" stroke="#9a9a9a" stroke-width=".8"/>
<path d="M1217.3 660.9C1219.6 658.9 1228.9 657.4 1232.8 658.7C1236.6 659.9 1239.9 664.8 1240.5 668.4C1241.1 672.0 1238.7 678.9 1236.4 680.3C1234.2 681.7 1229.9 678.2 1227.1 676.6C1224.2 675.0 1221.0 673.2 1219.4 670.6C1217.7 668.0 1215.1 662.9 1217.3 660.9Z" fill="#7f7f7f" filter="url(#b2)"/>
<ellipse cx="1231.1" cy="687.7" rx="4.9" ry="7.5" fill="#b9b9bb"/>
<!-- rear wheel -->
<path d="M1612 628 Q1598 655 1589 676 L1565 704 Q1564 716 1570 726 Q1578 738 1590 746 Q1602 754 1616 758 Q1628 761 1642 762 L1662 760.5 L1662 600Z" fill="#1b1b1b"/>
<clipPath id="tcr"><path d="M1612 628 Q1598 655 1589 676 L1565 704 Q1564 716 1570 726 Q1578 738 1590 746 Q1602 754 1616 758 Q1628 761 1642 762 L1662 760.5 L1662 600Z"/></clipPath><g clip-path="url(#tcr)">
<path d="M1601.5 623.6 A52.0 102.4 0 0 0 1652.2 761.1" fill="none" stroke="#2a2a2a" stroke-width="2" stroke-dasharray="5 3"/>
<path d="M1592.3 625.0 A52.0 102.4 0 0 0 1643.0 762.4" fill="none" stroke="#101010" stroke-width="2" stroke-dasharray="5 3"/>
<path d="M1583.2 626.3 A52.0 102.4 0 0 0 1633.9 763.7" fill="none" stroke="#2a2a2a" stroke-width="2" stroke-dasharray="5 3"/>
</g>
<ellipse cx="1662.0" cy="657.0" rx="52.0" ry="104.0" fill="#222"/>
<path d="M1644.7 560.7 A50.5 102.5 0 0 0 1657.6 759.1" fill="none" stroke="#343434" stroke-width="3.5" stroke-dasharray="2.5 3.5"/>
<ellipse cx="1662.5" cy="657.5" rx="44.7" ry="89.4" fill="none" stroke="#292929" stroke-width="4"/>
<ellipse cx="1662.5" cy="661.0" rx="38.4" ry="69.4" fill="#111"/>
<ellipse cx="1662.5" cy="661.0" rx="36.4" ry="66.4" fill="#e9e9e9" stroke="#9c9c9c" stroke-width="1"/>
<ellipse cx="1662.5" cy="661.0" rx="30.6" ry="56.4" fill="#cfcfd1" stroke="#8f8f8f" stroke-width="1.2"/>
<ellipse cx="1662.5" cy="661.0" rx="28.4" ry="52.5" fill="none" stroke="#fafafa" stroke-width="2"/>
<ellipse cx="1662.5" cy="661.0" rx="33.9" ry="61.8" fill="none" stroke="#f7f7f7" stroke-width="2.5"/>
<path d="M1638.1 627.1C1639.9 623.9 1642.7 618.7 1645.8 616.5C1648.8 614.3 1653.9 613.1 1656.3 613.9C1658.7 614.6 1660.9 619.3 1660.3 621.2C1659.7 623.0 1654.8 623.0 1652.7 625.1C1650.5 627.2 1649.0 630.3 1647.6 633.8C1646.2 637.2 1645.9 642.6 1644.3 645.7C1642.7 648.8 1639.6 652.4 1638.1 652.4C1636.7 652.4 1636.1 648.5 1635.6 645.7C1635.0 643.0 1634.4 638.9 1634.8 635.8C1635.3 632.7 1636.3 630.3 1638.1 627.1Z" fill="#3c3c3c"/>
<path d="M1634.8 691.5C1635.6 690.3 1638.8 692.9 1640.7 694.9C1642.5 696.9 1643.8 701.2 1645.8 703.5C1647.8 705.8 1652.9 707.9 1652.7 708.8C1652.4 709.7 1647.0 709.9 1644.3 708.8C1641.6 707.7 1637.9 705.0 1636.3 702.2C1634.7 699.3 1634.1 692.8 1634.8 691.5Z" fill="#3c3c3c"/>
<path d="M1681.8 621.8C1682.5 622.7 1682.8 630.3 1683.6 633.8C1684.5 637.2 1685.7 639.0 1686.9 642.4C1688.0 645.8 1690.8 652.7 1690.5 654.4C1690.3 656.0 1687.0 654.7 1685.4 652.4C1683.9 650.0 1682.1 644.4 1681.1 640.4C1680.0 636.4 1679.1 631.6 1679.2 628.5C1679.4 625.4 1681.1 620.9 1681.8 621.8Z" fill="#3c3c3c"/>
<path d="M1681.8 669.6C1682.8 668.7 1688.8 670.7 1690.5 673.0C1692.2 675.2 1692.6 679.5 1692.0 682.9C1691.4 686.3 1688.9 691.2 1686.9 693.5C1684.9 695.9 1680.5 698.1 1680.0 696.9C1679.4 695.6 1682.9 689.3 1683.6 686.2C1684.3 683.1 1684.6 681.0 1684.3 678.3C1684.0 675.5 1680.8 670.5 1681.8 669.6Z" fill="#3c3c3c"/>
<path d="M1660.7 610.5C1660.9 609.7 1665.7 608.5 1668.0 609.2C1670.2 609.9 1674.3 613.6 1674.1 614.5C1674.0 615.4 1669.1 615.2 1666.9 614.5C1664.6 613.9 1660.5 611.4 1660.7 610.5Z" fill="#4a4a4a"/>
<path d="M1657.0 712.8C1657.0 713.7 1663.1 715.0 1666.1 714.1C1669.2 713.2 1675.2 708.4 1675.2 707.5C1675.2 706.6 1669.2 707.9 1666.1 708.8C1663.1 709.7 1657.0 711.9 1657.0 712.8Z" fill="#555"/>
<path d="M1643.6 649.0C1644.3 645.2 1646.8 638.0 1648.7 634.4C1650.5 630.9 1654.0 627.4 1654.5 627.8C1655.0 628.2 1652.7 633.8 1651.6 637.1C1650.5 640.4 1649.2 644.3 1647.9 647.7C1646.7 651.2 1645.0 657.5 1644.3 657.7C1643.6 657.9 1642.8 652.9 1643.6 649.0Z" fill="#fbfbfb"/>
<path d="M1675.6 694.2C1676.8 690.0 1679.5 682.0 1680.7 680.9C1681.9 679.8 1683.1 684.5 1682.9 687.6C1682.6 690.7 1680.8 696.4 1679.2 699.5C1677.7 702.6 1674.0 707.0 1673.4 706.2C1672.8 705.3 1674.4 698.4 1675.6 694.2Z" fill="#fbfbfb"/>
<path d="M1646.1 704.8 Q1668.0 718.1 1682.5 697.5" fill="none" stroke="#6a6a6a" stroke-width="1.6"/>
<path d="M1651.6 699.5 Q1666.1 710.1 1677.8 692.9" fill="none" stroke="#8a8a8a" stroke-width="1.2"/>
<ellipse cx="1657.8" cy="659.7" rx="22.2" ry="33.2" fill="url(#hub)" stroke="#9a9a9a" stroke-width=".8"/>
<path d="M1652.7 631.8C1654.7 630.0 1663.0 628.7 1666.5 629.8C1670.0 630.9 1672.9 635.2 1673.4 638.4C1674.0 641.6 1671.8 647.8 1669.8 649.0C1667.8 650.3 1664.0 647.2 1661.4 645.7C1658.9 644.3 1655.9 642.7 1654.5 640.4C1653.0 638.1 1650.7 633.6 1652.7 631.8Z" fill="#7f7f7f" filter="url(#b2)"/>
<ellipse cx="1665.0" cy="655.7" rx="4.4" ry="6.6" fill="#b9b9bb"/>

</svg>
<div class="banner">
<span class="b1">Ho Ho Ho!</span>
<span class="tofu" style="left:760.4px">&#9647;</span>
<span class="tofu" style="left:794px">&#9647;</span>
<span class="b2">Enjoy 5% Off Your Holiday Order over $30. Code: SANTA5</span>
<span class="tofu" style="left:1204.8px">&#9647;</span>
<svg style="position:absolute;left:1224px;top:11px" width="18" height="18" viewBox="0 0 18 18" fill="none" stroke="#fff" stroke-width="1.9" stroke-linecap="round" stroke-linejoin="round"><path d="M2.5 9H15.5M10.5 3.8L15.7 9L10.5 14.2"/></svg>
</div>
<div class="logo"></div>
<svg style="position:absolute;left:1576px;top:50px" width="200" height="50" viewBox="1576 50 200 50" fill="none" stroke="#000" stroke-width="2" stroke-linejoin="round">
<circle cx="1594.1" cy="70.3" r="4.5"/>
<path d="M1586.1 83.9V82.4Q1586.1 77.8 1590.6 77.8Q1591.6 77.8 1594.1 78.7Q1596.6 77.8 1597.6 77.8Q1602.1 77.8 1602.1 82.4V83.9Z"/>
<circle cx="1642.1" cy="72.9" r="7.1"/>
<path d="M1647.3 78.2L1653.3 84.2" stroke-width="2.3"/>
<path d="M1693.5 66.3L1696.3 72.1L1702.4 73L1698 77.4L1699 83.7L1693.5 80.7L1688 83.7L1689 77.4L1684.6 73L1690.7 72.1Z"/>
<path d="M1736.1 70.8H1751.8V81.4Q1751.8 83.9 1749.3 83.9H1738.6Q1736.1 83.9 1736.1 81.4Z"/>
<path d="M1740.3 74V69.5Q1740.3 65.8 1744 65.8Q1747.7 65.8 1747.7 69.5V74" stroke-linecap="round"/>
</svg>
<div class="badge" style="left:1698px">0</div>
<div class="badge" style="left:1748px">0</div>
</body>
</html>
